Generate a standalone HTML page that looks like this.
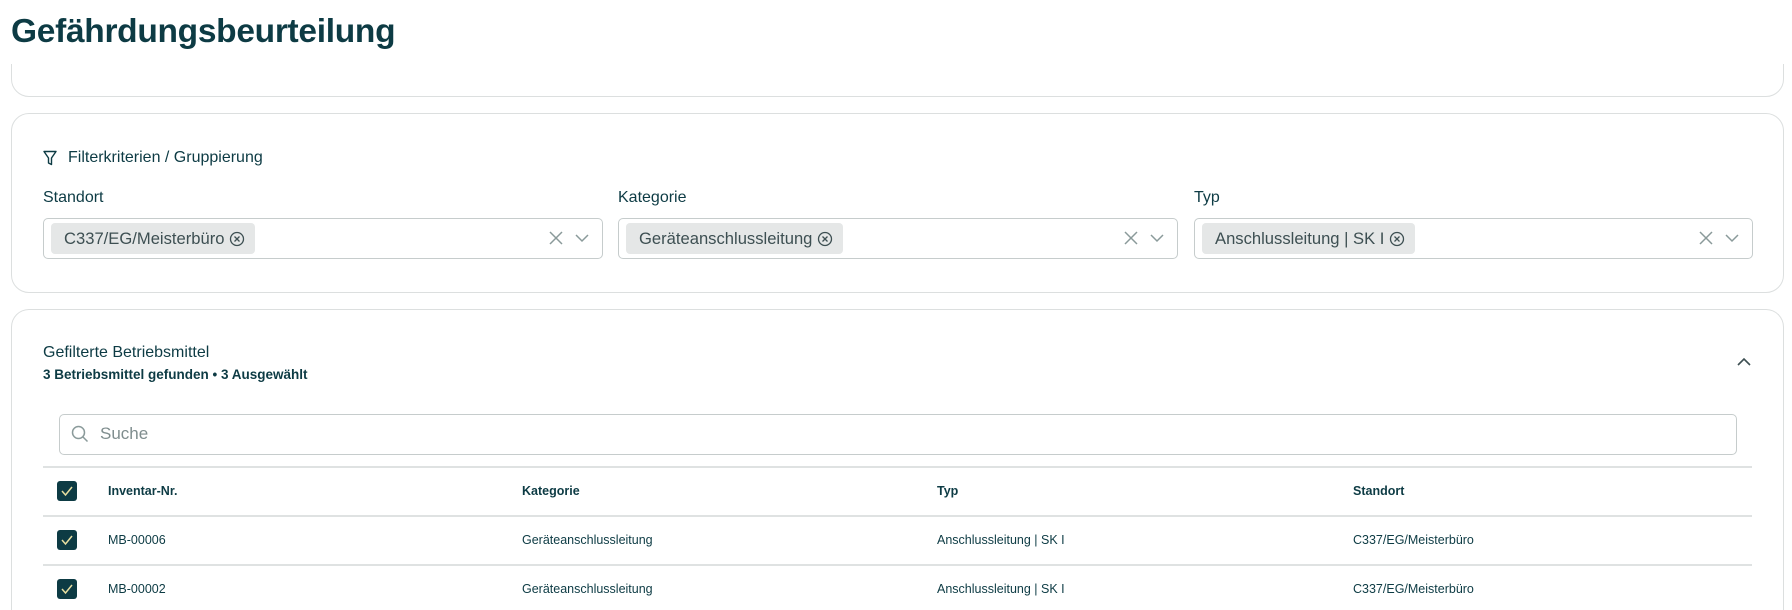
<!DOCTYPE html>
<html><head><meta charset="utf-8">
<style>
*{box-sizing:border-box;margin:0;padding:0}
html,body{width:1792px;height:610px;overflow:hidden}
body{background:#fff;font-family:"Liberation Sans",sans-serif;color:#0d3b44;position:relative}
.abs{position:absolute}
h1{position:absolute;z-index:5;left:11px;top:13px;font-size:33.5px;font-weight:bold;color:#0d3b44;letter-spacing:-0.3px}
.card{position:absolute;left:11px;width:1773px;border:1.5px solid #dcdfdf;border-radius:18px;background:#fff}
.lbl{position:absolute;font-size:16px;color:#0d3b44}
.sel{position:absolute;top:218px;height:41px;border:1.5px solid #c6cccc;border-radius:5px}
.chip{position:absolute;left:7px;top:4px;height:31px;background:#e5e7e7;border-radius:4px;padding:0 10px 0 13px;font-size:16.6px;line-height:31px;color:#3d4f52;white-space:nowrap}
.chip svg{vertical-align:-3px;margin-left:5px}
.ic{position:absolute;top:11px}
.th,.td{position:absolute;font-size:12.5px;color:#0d3b44}
.th{font-weight:bold}
.line{position:absolute;left:43px;width:1709px;height:2px;background:#dfe2e2}
.cb{position:absolute;left:57px;width:20px;height:20px;background:#0d3b44;border-radius:3px}
</style></head><body>
<div class="card" style="top:-30px;height:127px"></div>
<div class="abs" style="left:0;top:0;width:1792px;height:64px;background:#fff;z-index:4"></div>
<h1>Gefährdungsbeurteilung</h1>
<div class="card" style="top:113px;height:180px"></div>
<svg class="abs" style="left:43px;top:150px" width="14" height="16" viewBox="0 0 14 16"><path d="M1 1.5h12L8.5 8v6.5l-3-1.5V8z" fill="none" stroke="#0d3b44" stroke-width="1.4" stroke-linejoin="round"/></svg>
<div class="lbl" style="left:68px;top:149px;font-size:16px">Filterkriterien / Gruppierung</div>
<div class="lbl" style="left:43px;top:189px">Standort</div>
<div class="lbl" style="left:618px;top:189px">Kategorie</div>
<div class="lbl" style="left:1194px;top:189px">Typ</div>

<div class="sel" style="left:43px;width:560px"><div class="chip">C337/EG/Meisterbüro<svg width="16" height="16" viewBox="0 0 16 16"><circle cx="8" cy="8" r="6.5" fill="none" stroke="#3d4f52" stroke-width="1.3"/><path d="M5.5 5.5l5 5M10.5 5.5l-5 5" stroke="#3d4f52" stroke-width="1.3"/></svg></div>
<svg class="ic" style="right:38px" width="16" height="16" viewBox="0 0 16 16"><path d="M2 2l12 12M14 2L2 14" stroke="#8a9a9a" stroke-width="1.5"/></svg>
<svg class="ic" style="right:12px" width="16" height="16" viewBox="0 0 16 16"><path d="M2 5l6 6 6-6" fill="none" stroke="#8a9a9a" stroke-width="1.5"/></svg></div>

<div class="sel" style="left:618px;width:560px"><div class="chip">Geräteanschlussleitung<svg width="16" height="16" viewBox="0 0 16 16"><circle cx="8" cy="8" r="6.5" fill="none" stroke="#3d4f52" stroke-width="1.3"/><path d="M5.5 5.5l5 5M10.5 5.5l-5 5" stroke="#3d4f52" stroke-width="1.3"/></svg></div>
<svg class="ic" style="right:38px" width="16" height="16" viewBox="0 0 16 16"><path d="M2 2l12 12M14 2L2 14" stroke="#8a9a9a" stroke-width="1.5"/></svg>
<svg class="ic" style="right:12px" width="16" height="16" viewBox="0 0 16 16"><path d="M2 5l6 6 6-6" fill="none" stroke="#8a9a9a" stroke-width="1.5"/></svg></div>

<div class="sel" style="left:1194px;width:559px"><div class="chip">Anschlussleitung | SK I<svg width="16" height="16" viewBox="0 0 16 16"><circle cx="8" cy="8" r="6.5" fill="none" stroke="#3d4f52" stroke-width="1.3"/><path d="M5.5 5.5l5 5M10.5 5.5l-5 5" stroke="#3d4f52" stroke-width="1.3"/></svg></div>
<svg class="ic" style="right:38px" width="16" height="16" viewBox="0 0 16 16"><path d="M2 2l12 12M14 2L2 14" stroke="#8a9a9a" stroke-width="1.5"/></svg>
<svg class="ic" style="right:12px" width="16" height="16" viewBox="0 0 16 16"><path d="M2 5l6 6 6-6" fill="none" stroke="#8a9a9a" stroke-width="1.5"/></svg></div>

<div class="card" style="top:309px;height:301px;border-bottom:none;border-radius:18px 18px 0 0"></div>
<div class="lbl" style="left:43px;top:344px;font-size:16px">Gefilterte Betriebsmittel</div>
<div class="lbl" style="left:43px;top:367px;font-size:13.5px;font-weight:bold">3 Betriebsmittel gefunden • 3 Ausgewählt</div>
<svg class="abs" style="left:1736px;top:356px" width="16" height="12" viewBox="0 0 16 12"><path d="M2 9l6-6 6 6" fill="none" stroke="#3d4f52" stroke-width="1.6"/></svg>

<div class="abs" style="left:59px;top:414px;width:1678px;height:41px;border:1.5px solid #c6cccc;border-radius:5px"></div>
<svg class="abs" style="left:71px;top:425px" width="18" height="18" viewBox="0 0 18 18"><circle cx="7.5" cy="7.5" r="6" fill="none" stroke="#8a9a9a" stroke-width="1.5"/><path d="M12 12l4.5 4.5" stroke="#8a9a9a" stroke-width="1.5"/></svg>
<div class="lbl" style="left:100px;top:424px;color:#7f8d8e;font-size:17px">Suche</div>

<div class="line" style="top:466px"></div>
<div class="line" style="top:515px"></div>
<div class="line" style="top:564px"></div>

<div class="cb" style="top:481px"></div>
<div class="cb" style="top:530px"></div>
<div class="cb" style="top:579px"></div>
<svg class="abs" style="left:57px;top:481px" width="20" height="120" viewBox="0 0 20 120"><g fill="none" stroke="#e8dfa0" stroke-width="1.5"><path d="M5 10l3.5 4L15 6"/><path d="M5 59l3.5 4L15 55"/><path d="M5 108l3.5 4L15 104"/></g></svg>

<div class="th" style="left:108px;top:484px">Inventar-Nr.</div>
<div class="th" style="left:522px;top:484px">Kategorie</div>
<div class="th" style="left:937px;top:484px">Typ</div>
<div class="th" style="left:1353px;top:484px">Standort</div>

<div class="td" style="left:108px;top:533px">MB-00006</div>
<div class="td" style="left:522px;top:533px">Geräteanschlussleitung</div>
<div class="td" style="left:937px;top:533px">Anschlussleitung | SK I</div>
<div class="td" style="left:1353px;top:533px">C337/EG/Meisterbüro</div>

<div class="td" style="left:108px;top:582px">MB-00002</div>
<div class="td" style="left:522px;top:582px">Geräteanschlussleitung</div>
<div class="td" style="left:937px;top:582px">Anschlussleitung | SK I</div>
<div class="td" style="left:1353px;top:582px">C337/EG/Meisterbüro</div>
</body></html>
